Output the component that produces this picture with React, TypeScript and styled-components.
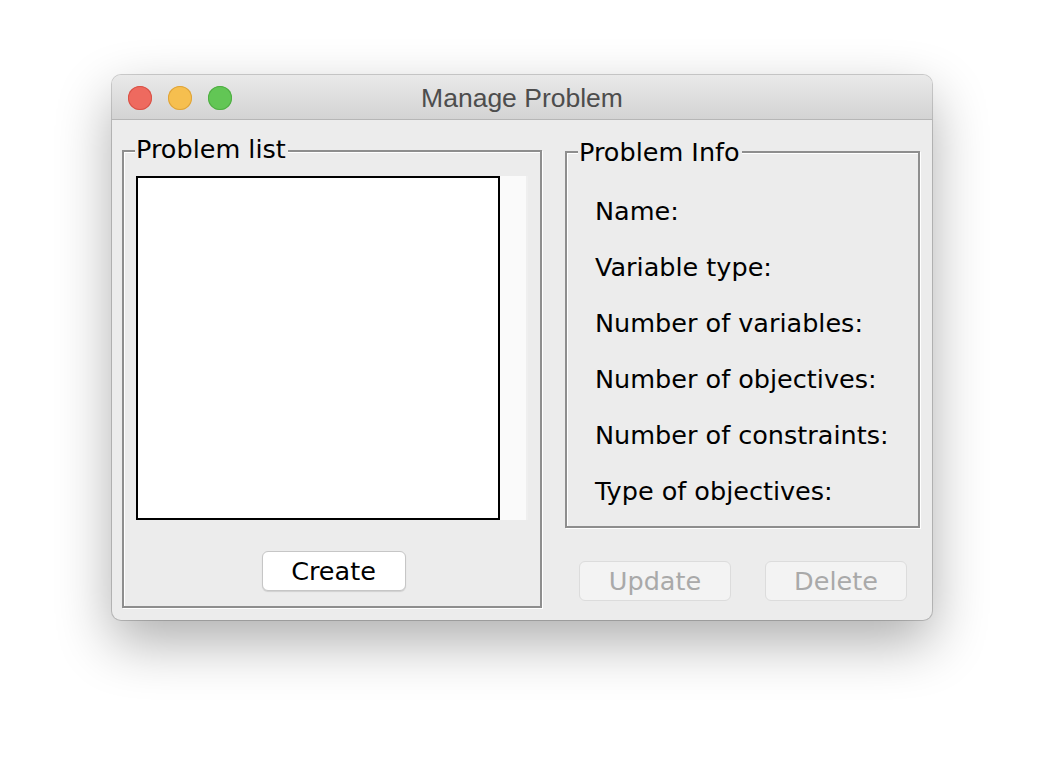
import React from "react";
import styled, { createGlobalStyle } from "styled-components";

const Global = createGlobalStyle`
  html, body { margin: 0; padding: 0; background: #ffffff; }
  body { font-family: "DejaVu Sans", "Liberation Sans", sans-serif; }
`;

const Page = styled.div`
  width: 1044px;
  height: 768px;
  padding: 75px 0 0 112px;
  box-sizing: border-box;
`;

const Window = styled.div`
  width: 820px;
  height: 545px;
  border-radius: 9px;
  background: #ececec;
  box-shadow: 0 0 0 1px rgba(0, 0, 0, 0.18), 0 22px 55px rgba(0, 0, 0, 0.32);
  overflow: hidden;
  display: flex;
  flex-direction: column;
`;

const TitleBar = styled.div`
  position: relative;
  height: 44px;
  flex: none;
  background: linear-gradient(#e9e9e9, #d3d3d3);
  border-bottom: 1px solid #b6b6b6;
  display: flex;
  align-items: center;
  justify-content: center;
`;

const Lights = styled.div`
  position: absolute;
  left: 16px;
  top: 11px;
  display: flex;
  gap: 16px;
`;

const Light = styled.span<{ $fill: string; $edge: string }>`
  width: 24px;
  height: 24px;
  border-radius: 50%;
  background: ${(p) => p.$fill};
  box-shadow: inset 0 0 0 1px ${(p) => p.$edge};
`;

const Title = styled.div`
  font-family: "Liberation Sans", sans-serif;
  font-size: 26.5px;
  color: #4d4d4d;
  margin-top: 3px;
`;

const Content = styled.div`
  flex: 1;
  display: flex;
  padding: 0 12px 12px 10px;
  gap: 23px;
`;

const Group = styled.div<{ $w: number; $h: number }>`
  position: relative;
  width: ${(p) => p.$w}px;
  height: ${(p) => p.$h}px;
  box-sizing: border-box;
  border: 2px solid #8e8e8e;
  box-shadow: inset 1px 1px 0 #ffffff, 1px 1px 0 #ffffff;
`;

const Legend = styled.span<{ $top: number }>`
  position: absolute;
  top: ${(p) => p.$top}px;
  left: 11px;
  padding: 0 2px 0 1px;
  background: #ececec;
  font-size: 25.5px;
  line-height: 32px;
  color: #000;
`;

const LeftCol = styled.div`
  padding-top: 30px;
`;

const RightCol = styled.div`
  padding-top: 31px;
  display: flex;
  flex-direction: column;
`;

const LeftInner = styled.div`
  padding: 24px 12px 0 12px;
  display: flex;
  flex-direction: column;
  align-items: center;
`;

const ListWrap = styled.div`
  display: flex;
  align-self: stretch;
`;

const ListBox = styled.div`
  width: 364px;
  height: 344px;
  flex: none;
  box-sizing: border-box;
  border: 2px solid #000;
  background: #fff;
`;

const ScrollTrack = styled.div`
  width: 26px;
  height: 344px;
  flex: none;
  background: #fafafa;
  border-right: 2px solid #efefef;
`;

const Button = styled.button<{ $w: number; $disabled?: boolean }>`
  width: ${(p) => p.$w}px;
  height: 40px;
  box-sizing: border-box;
  border-radius: 6px;
  border: 1px solid ${(p) => (p.$disabled ? "#dcdcdc" : "#c6c6c6")};
  background: ${(p) => (p.$disabled ? "#f3f3f3" : "#ffffff")};
  box-shadow: ${(p) => (p.$disabled ? "none" : "0 1px 1px rgba(0,0,0,0.12)")};
  color: ${(p) => (p.$disabled ? "#a9a9a9" : "#000")};
  font-family: "DejaVu Sans", sans-serif;
  font-size: 25.5px;
  padding: 0;
  display: flex;
  align-items: center;
  justify-content: center;
`;

const CreateRow = styled.div`
  margin-top: 31px;
  padding-left: 3px;
`;

const InfoList = styled.div`
  padding: 30px 0 0 28px;
  display: flex;
  flex-direction: column;
`;

const InfoRow = styled.div`
  height: 56px;
  line-height: 56px;
  font-size: 25.5px;
  color: #000;
  white-space: nowrap;
`;

const ButtonRow = styled.div`
  margin-top: 33px;
  padding: 0 13px 0 14px;
  display: flex;
  justify-content: space-between;
`;

const infoLabels = [
  "Name:",
  "Variable type:",
  "Number of variables:",
  "Number of objectives:",
  "Number of constraints:",
  "Type of objectives:",
];

export default function App() {
  return (
    <Page>
      <Global />
      <Window>
        <TitleBar>
          <Lights>
            <Light $fill="#ee6a5f" $edge="#d85247" />
            <Light $fill="#f6bf4f" $edge="#dea33a" />
            <Light $fill="#62c655" $edge="#4fad43" />
          </Lights>
          <Title>Manage Problem</Title>
        </TitleBar>
        <Content>
          <LeftCol>
            <Group $w={420} $h={458}>
              <Legend $top={-19}>Problem list</Legend>
              <LeftInner>
                <ListWrap>
                  <ListBox />
                  <ScrollTrack />
                </ListWrap>
                <CreateRow>
                  <Button $w={144}>Create</Button>
                </CreateRow>
              </LeftInner>
            </Group>
          </LeftCol>
          <RightCol>
            <Group $w={355} $h={377}>
              <Legend $top={-17}>Problem Info</Legend>
              <InfoList>
                {infoLabels.map((l) => (
                  <InfoRow key={l}>{l}</InfoRow>
                ))}
              </InfoList>
            </Group>
            <ButtonRow>
              <Button $w={152} $disabled>
                Update
              </Button>
              <Button $w={142} $disabled>
                Delete
              </Button>
            </ButtonRow>
          </RightCol>
        </Content>
      </Window>
    </Page>
  );
}
